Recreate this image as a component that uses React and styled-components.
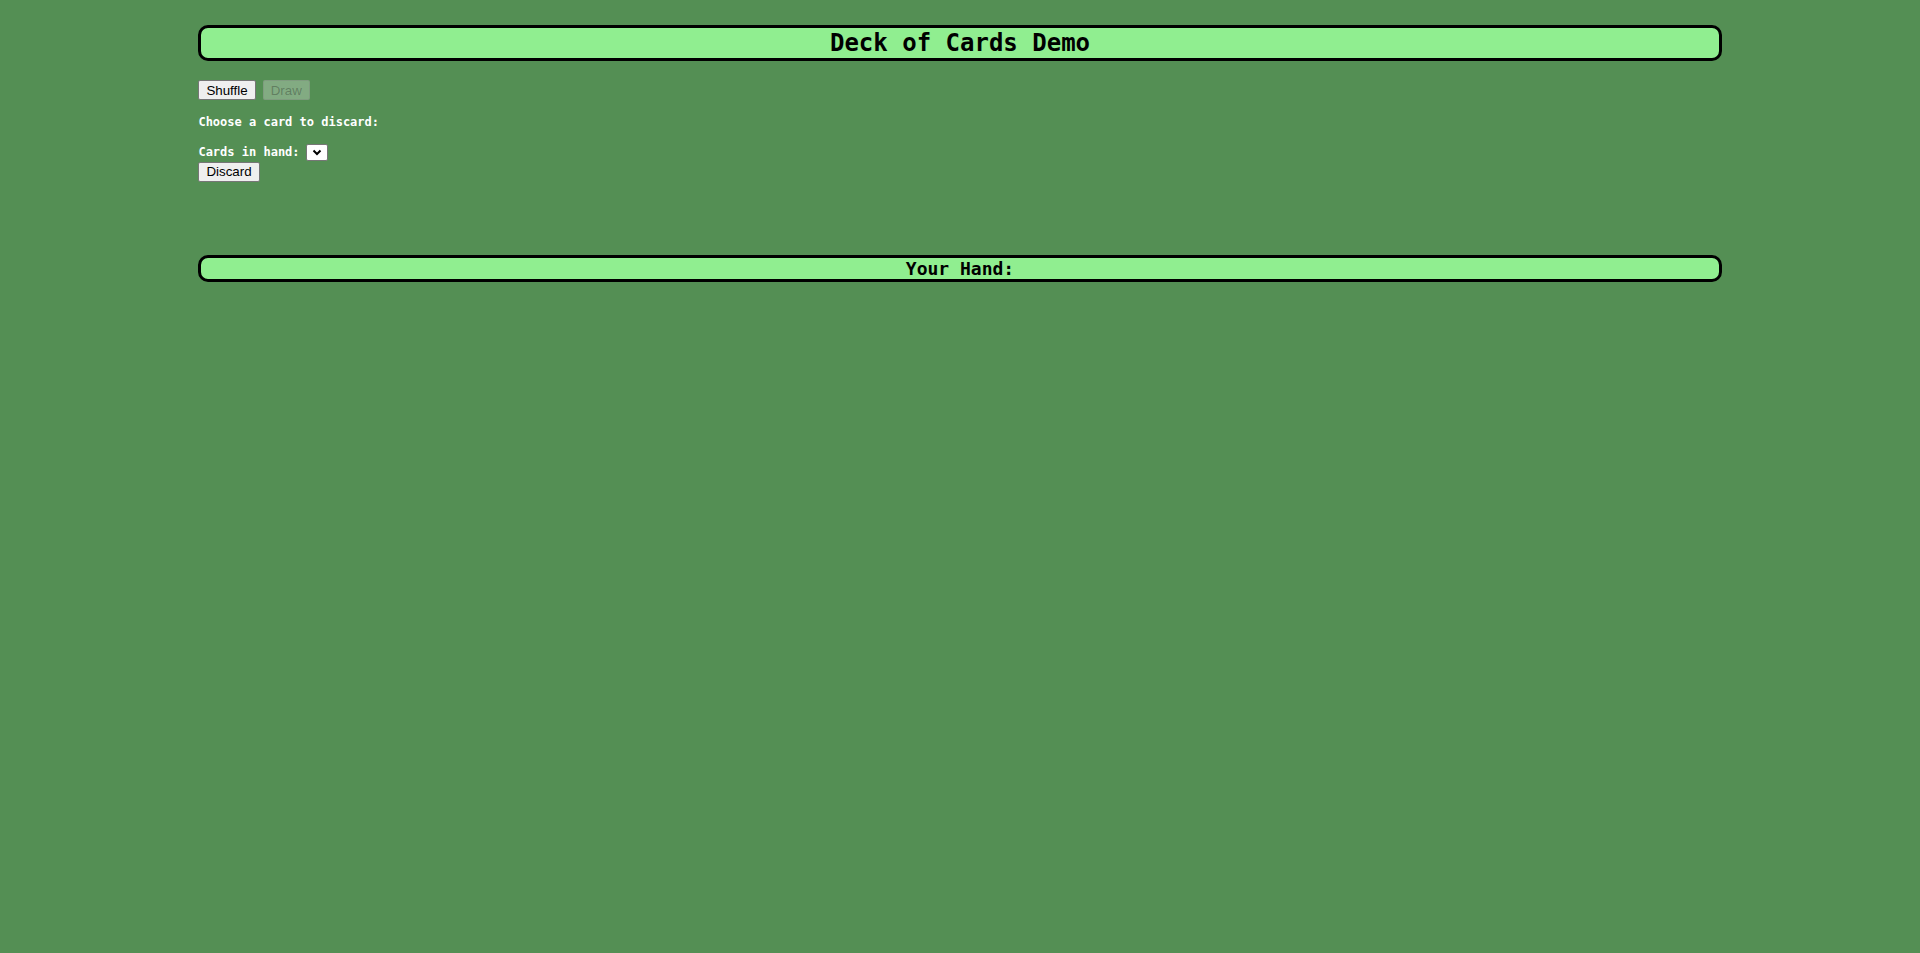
import React from "react";
import styled, { createGlobalStyle } from "styled-components";

const GlobalStyle = createGlobalStyle`
  html, body {
    background-color: #548f54;
  }
  body {
    margin: 8px;
    min-height: 937px;
  }
`;

const Container = styled.div`
  width: 80%;
  margin: 0 auto;
  font-family: "DejaVu Sans Mono", "Liberation Mono", monospace;
`;

const Banner = styled.div`
  box-sizing: border-box;
  margin-top: ${(p) => p.top}px;
  height: ${(p) => p.height}px;
  border: 3px solid #000;
  border-radius: 10px;
  background-color: #90ee90;
  color: #000;
  font-weight: bold;
  font-size: ${(p) => p.size}px;
  line-height: ${(p) => p.height - 6}px;
  text-align: center;
`;

const ButtonRow = styled.div`
  display: flex;
  gap: 7px;
  margin-top: 19px;
`;

const Button = styled.button`
  box-sizing: border-box;
  height: 20px;
  padding: 0 7px;
  font-family: "Liberation Sans", Arial, sans-serif;
  font-size: 13.33px;
  color: #000;
  background-color: #efefef;
  border: 1px solid #767676;
  border-radius: 2px;

  &:disabled {
    color: rgba(16, 16, 16, 0.3);
    background-color: rgba(239, 239, 239, 0.3);
    border-color: rgba(118, 118, 118, 0.3);
  }
`;

const Label = styled.div`
  margin-top: ${(p) => p.top}px;
  color: #fff;
  font-size: 12px;
  font-weight: bold;
  line-height: 14px;
`;

const HandRow = styled.div`
  display: flex;
  align-items: center;
  gap: 6px;
  margin-top: 13px;
  height: 19px;
  color: #fff;
  font-size: 12px;
  font-weight: bold;
`;

const SelectBox = styled.div`
  box-sizing: border-box;
  width: 22px;
  height: 17px;
  display: flex;
  align-items: center;
  justify-content: center;
  background: #fff;
  border: 1px solid #767676;
  border-radius: 2px;
  margin-top: 1px;
`;

const Chevron = () => (
  <svg width="10" height="7" viewBox="0 0 10 7">
    <path d="M1.5 1.5 L5 5 L8.5 1.5" fill="none" stroke="#000" strokeWidth="2" />
  </svg>
);

const App = () => {
  return (
    <>
      <GlobalStyle />
      <Container>
        <Banner top={17} height={36} size={24}>
          Deck of Cards Demo
        </Banner>
        <ButtonRow>
          <Button>Shuffle</Button>
          <Button disabled>Draw</Button>
        </ButtonRow>
        <Label top={15}>Choose a card to discard:</Label>
        <HandRow>
          Cards in hand:
          <SelectBox>
            <Chevron />
          </SelectBox>
        </HandRow>
        <Button>Discard</Button>
        <Banner top={73} height={27} size={18}>
          Your Hand:
        </Banner>
      </Container>
    </>
  );
};

export default App;
